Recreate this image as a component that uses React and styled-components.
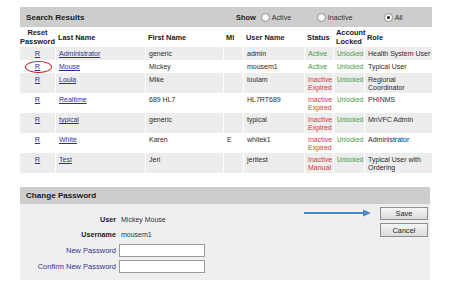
import React from "react";
import styled, { createGlobalStyle } from "styled-components";

const Global = createGlobalStyle`
  html, body { margin: 0; padding: 0; background: #fff; }
  body { font-family: "Liberation Sans", Arial, sans-serif; color: #222; }
`;

const Page = styled.div`
  padding: 7px 0 0 20px;
  display: flex;
  flex-direction: column;
  gap: 14px;
`;

const Panel = styled.section`
  position: relative;
  width: ${(p) => p.$w}px;
  background: ${(p) => p.$bg || "#fff"};
`;

const Bar = styled.div`
  display: flex;
  align-items: center;
  height: ${(p) => p.$h}px;
  background: #cdcdcd;
  padding-left: 6px;
`;

const Title = styled.div`
  font-weight: bold;
  font-size: 8.1px;
  color: #1a1a1a;
  width: ${(p) => p.$w || "auto"};
`;

const ShowLabel = styled.span`
  font-weight: bold;
  font-size: 7.4px;
  margin-right: 5px;
`;

const Option = styled.label`
  display: flex;
  align-items: center;
  gap: 2px;
  width: ${(p) => p.$w}px;
  font-size: 7.2px;
  color: #333;
`;

const Radio = styled.span`
  width: 7px;
  height: 7px;
  border-radius: 50%;
  border: 1px solid #8c8c8c;
  background: #fff;
  display: inline-flex;
  align-items: center;
  justify-content: center;
  &::after {
    content: "";
    width: 3px;
    height: 3px;
    border-radius: 50%;
    background: ${(p) => (p.$on ? "#111" : "transparent")};
  }
`;

const Table = styled.table`
  width: 412px;
  table-layout: fixed;
  border-collapse: separate;
  border-spacing: 0;
`;

const Th = styled.th`
  height: 20px;
  padding: 0 0 0 3px;
  font-size: 7.4px;
  line-height: 9px;
  font-weight: bold;
  text-align: ${(p) => (p.$center ? "center" : "left")};
  vertical-align: middle;
  color: #1a1a1a;
  white-space: nowrap;
  ${(p) => p.$center && "padding: 0;"}
`;

const Tr = styled.tr`
  height: ${(p) => p.$h}px;
  background: ${(p) => (p.$alt ? "#ededed" : "#fff")};
`;

const Td = styled.td`
  padding: 3px 0 0 3px;
  font-size: ${(p) => p.$size || "7px"};
  line-height: 8px;
  vertical-align: top;
  white-space: nowrap;
  color: ${(p) => p.$color || "#2a2a2a"};
  text-align: ${(p) => (p.$center ? "center" : "left")};
  border-left: ${(p) => (p.$first ? "0" : "1px solid #fff")};
  ${(p) => p.$center && "padding-left: 0;"}
`;

const Link = styled.a`
  color: #2f3090;
  text-decoration: underline;
  font-size: ${(p) => (p.$big ? "7.4px" : "7px")};
`;

const Mark = styled.span`
  position: absolute;
  left: 5px;
  top: 54px;
  width: 27px;
  height: 12px;
  border: 1.6px solid #c8161d;
  border-radius: 50%;
  box-sizing: border-box;
  pointer-events: none;
`;

const Body = styled.div`
  display: flex;
  justify-content: space-between;
  padding: 0 2px 6px 0;
  height: 76px;
  box-sizing: border-box;
`;

const Form = styled.div`
  display: grid;
  grid-template-columns: 96px 86px;
  grid-template-rows: 15px 15px 16px 16px;
  column-gap: 3px;
  align-items: center;
  padding-top: 8px;
`;

const Label = styled.div`
  text-align: right;
  font-size: ${(p) => (p.$bold ? "7.2px" : "7.5px")};
  font-weight: ${(p) => (p.$bold ? "bold" : "normal")};
  color: ${(p) => (p.$bold ? "#1a1a1a" : "#34348a")};
  white-space: nowrap;
`;

const Value = styled.div`
  font-size: 7px;
  color: #333;
  padding-left: 2px;
`;

const Input = styled.div`
  width: 86px;
  height: 13px;
  box-sizing: border-box;
  background: #fff;
  border: 1px solid #9a9a9a;
`;

const Buttons = styled.div`
  display: flex;
  flex-direction: column;
  gap: 3px;
  padding-top: 3px;
`;

const Button = styled.button`
  width: 48px;
  height: ${(p) => p.$h}px;
  padding: 0;
  font-family: inherit;
  font-size: 7.4px;
  color: #222;
  border: 1px solid #8e8e8e;
  background: linear-gradient(#f6f6f6, #dadada);
`;

const Arrow = styled.svg`
  position: absolute;
  left: 283px;
  top: 22px;
`;

const G = "#3f9a3f";
const RD = "#cf3b3b";

const rows = [
  { last: "Administrator", first: "generic", mi: "", user: "admin", status: ["Active"], role: ["Health System User"], h: 13 },
  { last: "Mouse", first: "Mickey", mi: "", user: "mousem1", status: ["Active"], role: ["Typical User"], h: 13 },
  { last: "Loula", first: "Mike", mi: "", user: "loulam", status: ["Inactive", "Expired"], role: ["Regional", "Coordinator"], h: 20 },
  { last: "Realtime", first: "689 HL7", mi: "", user: "HL7RT689", status: ["Inactive", "Expired"], role: ["PHINMS"], h: 20 },
  { last: "typical", first: "generic", mi: "", user: "typical", status: ["Inactive", "Expired"], role: ["MnVFC Admin"], h: 20 },
  { last: "White", first: "Karen", mi: "E", user: "whitek1", status: ["Inactive", "Expired"], role: ["Administrator"], h: 20 },
  { last: "Test", first: "Jeri", mi: "", user: "jeritest", status: ["Inactive", "Manual"], role: ["Typical User with", "Ordering"], h: 20 },
];

const Lines = ({ items }) =>
  items.map((t, i) => (
    <React.Fragment key={i}>
      {i > 0 && <br />}
      {t}
    </React.Fragment>
  ));

export default function App() {
  return (
    <Page>
      <Global />
      <Panel $w={412}>
        <Bar $h={20}>
          <Title $w="210px">Search Results</Title>
          <ShowLabel>Show</ShowLabel>
          <Option $w={56}><Radio /> Active</Option>
          <Option $w={67}><Radio /> Inactive</Option>
          <Option $w={30}><Radio $on /> All</Option>
        </Bar>
        <Table>
          <colgroup>
            <col style={{ width: 35 }} />
            <col style={{ width: 90 }} />
            <col style={{ width: 78 }} />
            <col style={{ width: 20 }} />
            <col style={{ width: 61 }} />
            <col style={{ width: 29 }} />
            <col style={{ width: 31 }} />
            <col style={{ width: 68 }} />
          </colgroup>
          <thead>
            <tr>
              <Th $center>Reset<br />Password</Th>
              <Th>Last Name</Th>
              <Th>First Name</Th>
              <Th>MI</Th>
              <Th>User Name</Th>
              <Th>Status</Th>
              <Th>Account<br />Locked</Th>
              <Th>Role</Th>
            </tr>
          </thead>
          <tbody>
            {rows.map((r, i) => (
              <Tr key={r.user} $h={r.h} $alt={i % 2 === 0}>
                <Td $first $center><Link $big href="#">R</Link></Td>
                <Td><Link href="#">{r.last}</Link></Td>
                <Td>{r.first}</Td>
                <Td>{r.mi}</Td>
                <Td>{r.user}</Td>
                <Td $color={r.status[0] === "Active" ? G : RD}><Lines items={r.status} /></Td>
                <Td $color={G} $size="6.3px">Unlocked</Td>
                <Td><Lines items={r.role} /></Td>
              </Tr>
            ))}
          </tbody>
        </Table>
        <Mark />
      </Panel>

      <Panel $w={410} $bg="#efefef">
        <Bar $h={17}>
          <Title>Change Password</Title>
        </Bar>
        <Body>
          <Form>
            <Label $bold>User</Label>
            <Value>Mickey Mouse</Value>
            <Label $bold>Username</Label>
            <Value>mousem1</Value>
            <Label>New Password</Label>
            <Input />
            <Label>Confirm New Password</Label>
            <Input />
          </Form>
          <Buttons>
            <Button $h={13}>Save</Button>
            <Button $h={14}>Cancel</Button>
          </Buttons>
        </Body>
        <Arrow width="70" height="8" viewBox="0 0 70 8">
          <line x1="1" y1="4" x2="62" y2="4" stroke="#4a88c9" strokeWidth="1.8" />
          <polygon points="60,0.5 68,4 60,7.5" fill="#4a88c9" />
        </Arrow>
      </Panel>
    </Page>
  );
}
